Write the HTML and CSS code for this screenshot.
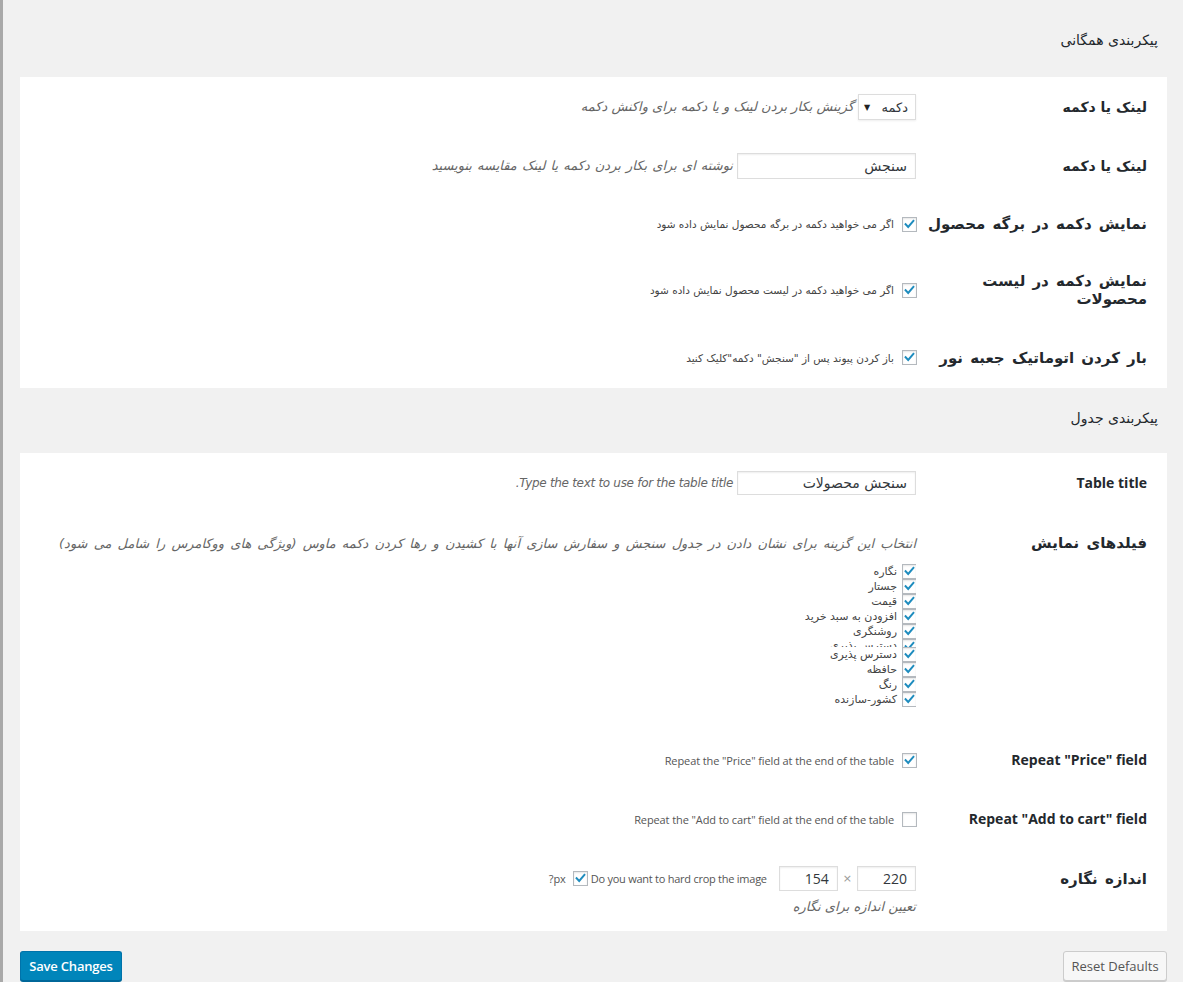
FILE: index.html
```html
<!DOCTYPE html>
<html lang="fa" dir="rtl">
<head>
<meta charset="utf-8">
<title>تنظیمات</title>
<link rel="stylesheet" href="styles.css">
</head>
<body>
<div class="frame">
<div class="wrap">
  <h2 class="sec-title first">پیکربندی همگانی</h2>
  <div class="panel">
    <div class="row h60">
      <div class="label tight">لینک یا دکمه</div>
      <div class="field">
        <div class="select"><span>دکمه</span><span class="arrow">▼</span></div>
        <span class="desc">گزینش بکار بردن لینک و یا دکمه برای واکنش دکمه</span>
      </div>
    </div>
    <div class="row h58">
      <div class="label tight">لینک یا دکمه</div>
      <div class="field">
        <div class="input wide">سنجش</div>
        <span class="desc spaced">نوشته ای برای بکار بردن دکمه یا لینک مقایسه بنویسید</span>
      </div>
    </div>
    <div class="row h58">
      <div class="label">نمایش دکمه در برگه محصول</div>
      <div class="field">
        <span class="cb on"><svg viewBox="0 0 16 16"><path d="M3.2 7.6 L6.4 11 L12.8 3.6"/></svg></span>
        <span class="small">اگر می خواهید دکمه در برگه محصول نمایش داده شود</span>
      </div>
    </div>
    <div class="row h74">
      <div class="label">نمایش دکمه در لیست<br>محصولات</div>
      <div class="field">
        <span class="cb on"><svg viewBox="0 0 16 16"><path d="M3.2 7.6 L6.4 11 L12.8 3.6"/></svg></span>
        <span class="small">اگر می خواهید دکمه در لیست محصول نمایش داده شود</span>
      </div>
    </div>
    <div class="row h61">
      <div class="label">بار کردن اتوماتیک جعبه نور</div>
      <div class="field">
        <span class="cb on"><svg viewBox="0 0 16 16"><path d="M3.2 7.6 L6.4 11 L12.8 3.6"/></svg></span>
        <span class="small">باز کردن پیوند پس از "سنجش" دکمه"کلیک کنید</span>
      </div>
    </div>
  </div>

  <h2 class="sec-title second">پیکربندی جدول</h2>
  <div class="panel">
    <div class="row h60">
      <div class="label en">Table title</div>
      <div class="field">
        <div class="input wide short">سنجش محصولات</div>
        <span class="desc en">Type the text to use for the table title.</span>
      </div>
    </div>
    <div class="row top fields-row">
      <div class="label">فیلدهای نمایش</div>
      <div class="field col">
        <span class="desc wider">انتخاب این گزینه برای نشان دادن در جدول سنجش و سفارش سازی آنها با کشیدن و رها کردن دکمه ماوس (ویژگی های ووکامرس را شامل می شود)</span>
        <div class="checklist">
          <div class="item"><span class="cb on"><svg viewBox="0 0 16 16"><path d="M3.2 7.6 L6.4 11 L12.8 3.6"/></svg></span><span>نگاره</span></div>
          <div class="item"><span class="cb on"><svg viewBox="0 0 16 16"><path d="M3.2 7.6 L6.4 11 L12.8 3.6"/></svg></span><span>جستار</span></div>
          <div class="item"><span class="cb on"><svg viewBox="0 0 16 16"><path d="M3.2 7.6 L6.4 11 L12.8 3.6"/></svg></span><span>قیمت</span></div>
          <div class="item"><span class="cb on"><svg viewBox="0 0 16 16"><path d="M3.2 7.6 L6.4 11 L12.8 3.6"/></svg></span><span>افزودن به سبد خرید</span></div>
          <div class="item"><span class="cb on"><svg viewBox="0 0 16 16"><path d="M3.2 7.6 L6.4 11 L12.8 3.6"/></svg></span><span>روشنگری</span></div>
          <div class="item cut"><span class="cb on"><svg viewBox="0 0 16 16"><path d="M3.2 7.6 L6.4 11 L12.8 3.6"/></svg></span><span>دسترس پذیری</span></div>
          <div class="item"><span class="cb on"><svg viewBox="0 0 16 16"><path d="M3.2 7.6 L6.4 11 L12.8 3.6"/></svg></span><span>دسترس پذیری</span></div>
          <div class="item"><span class="cb on"><svg viewBox="0 0 16 16"><path d="M3.2 7.6 L6.4 11 L12.8 3.6"/></svg></span><span>حافظه</span></div>
          <div class="item"><span class="cb on"><svg viewBox="0 0 16 16"><path d="M3.2 7.6 L6.4 11 L12.8 3.6"/></svg></span><span>رنگ</span></div>
          <div class="item"><span class="cb on"><svg viewBox="0 0 16 16"><path d="M3.2 7.6 L6.4 11 L12.8 3.6"/></svg></span><span>کشور-سازنده</span></div>
        </div>
      </div>
    </div>
    <div class="row h60">
      <div class="label en">Repeat "Price" field</div>
      <div class="field">
        <span class="cb on"><svg viewBox="0 0 16 16"><path d="M3.2 7.6 L6.4 11 L12.8 3.6"/></svg></span>
        <span class="small en">Repeat the "Price" field at the end of the table</span>
      </div>
    </div>
    <div class="row h58">
      <div class="label en">Repeat "Add to cart" field</div>
      <div class="field">
        <span class="cb"></span>
        <span class="small en">Repeat the "Add to cart" field at the end of the table</span>
      </div>
    </div>
    <div class="row top size-row">
      <div class="label">اندازه نگاره</div>
      <div class="field col">
        <div class="size-line">
          <div class="input num">220</div>
          <span class="times">×</span>
          <div class="input num">154</div>
          <span class="small en crop-text" dir="ltr">Do you want to hard crop the image</span>
          <span class="cb on crop"><svg viewBox="0 0 16 16"><path d="M3.2 7.6 L6.4 11 L12.8 3.6"/></svg></span>
          <span class="small en" dir="ltr">?px</span>
        </div>
        <span class="desc">تعیین اندازه برای نگاره</span>
      </div>
    </div>
  </div>

  <div class="actions">
    <button class="btn secondary" type="button">Reset Defaults</button>
    <button class="btn primary" type="button">Save Changes</button>
  </div>
</div>
</div>
</body>
</html>
```

FILE: styles.css
```css
html, body {
  margin: 0;
  padding: 0;
}
body {
  background: #f1f1f1;
  font-family: "DejaVu Sans", "Noto Sans", sans-serif;
  color: #444;
}
.frame {
  border-left: 3px solid #a9a9a9;
  min-height: 982px;
  box-sizing: border-box;
}
.wrap {
  padding: 0 16px 0 17px;
}
.sec-title {
  font-size: 14px;
  font-weight: normal;
  color: #23282d;
  margin: 0;
  line-height: 20px;
}
.sec-title.first {
  padding: 30px 9px 27px 0;
}
.sec-title.second {
  padding: 20px 9px 25px 0;
}
.panel {
  background: #fff;
  padding: 0 20px;
}
.row {
  display: grid;
  grid-template-columns: 231px 1fr;
  align-items: center;
}
.row.top {
  align-items: start;
}
.h58 { height: 58px; }
.h60 { height: 60px; }
.h61 { height: 61px; }
.h74 { height: 74px; }
.label {
  font-weight: bold;
  font-size: 15px;
  word-spacing: 2px;
  color: #23282d;
  padding-left: 10px;
  line-height: 18px;
  white-space: nowrap;
}
.label.tight {
  font-size: 14px;
  word-spacing: 0;
}
.label.en {
  font-family: "Open Sans", sans-serif;
  font-size: 14px;
  word-spacing: 0;
}
.field {
  display: flex;
  align-items: center;
  gap: 4px;
}
.field.col {
  flex-direction: column;
  align-items: flex-start;
  gap: 0;
}
.desc {
  font-style: italic;
  font-size: 13px;
  color: #666;
  line-height: 20px;
}
.desc.spaced {
  word-spacing: 1px;
}
.desc.wider {
  word-spacing: 2px;
}
.desc.en {
  font-size: 12px;
  letter-spacing: -0.3px;
}
.small {
  font-size: 10.5px;
  color: #444;
}
.small.en {
  font-family: "Open Sans", sans-serif;
  font-size: 11px;
  letter-spacing: -0.1px;
  color: #555;
}
.select {
  width: 58px;
  height: 26px;
  box-sizing: border-box;
  border: 1px solid #ddd;
  box-shadow: 0 1px 2px rgba(0,0,0,.07);
  display: flex;
  justify-content: space-between;
  align-items: center;
  padding: 0 7px 0 5px;
  font-size: 13px;
  color: #32373c;
}
.select .arrow {
  font-size: 8px;
  color: #222;
}
.input {
  height: 26px;
  box-sizing: border-box;
  border: 1px solid #ddd;
  box-shadow: inset 0 1px 2px rgba(0,0,0,.07);
  display: flex;
  align-items: center;
  padding: 0 8px;
  font-size: 14px;
  color: #32373c;
}
.input.wide {
  width: 179px;
}
.input.short {
  height: 24px;
}
.input.num {
  width: 59px;
  height: 25px;
  font-family: "Open Sans", sans-serif;
  font-size: 14px;
  justify-content: flex-start;
}
.cb {
  width: 15px;
  height: 15px;
  box-sizing: border-box;
  border: 1px solid #b4b9be;
  background: #fff;
  box-shadow: inset 0 1px 2px rgba(0,0,0,.1);
  display: inline-flex;
  flex: none;
  margin-left: 4px;
  margin-right: -1px;
}
.cb svg {
  width: 100%;
  height: 100%;
  display: block;
}
.cb path {
  fill: none;
  stroke: #1e8cbe;
  stroke-width: 2.4;
  stroke-linecap: square;
}
.fields-row {
  padding: 20px 0 23px;
}
.fields-row .label {
  line-height: 20px;
}
.fields-row .desc {
  margin-top: 1px;
}
.checklist {
  margin-top: 10px;
  display: flex;
  flex-direction: column;
}
.item {
  display: flex;
  align-items: center;
  height: 15px;
  overflow: hidden;
  font-size: 11px;
  color: #444;
}
.item .cb {
  margin-left: 5px;
}
.item.cut {
  height: 8px;
  align-items: flex-start;
}
.size-row {
  padding: 18px 0 14px;
}
.size-row .label {
  padding-top: 3px;
  line-height: 20px;
}
.size-line {
  display: flex;
  align-items: center;
}
.times {
  font-size: 11px;
  color: #999;
  margin: 0 5px;
}
.crop-text {
  margin-right: 12px;
}
.small.en.crop-text {
  letter-spacing: -0.25px;
}
.cb.crop {
  margin: 0 3px 0 7px;
}
.size-row .desc {
  margin-top: 6px;
}
.actions {
  display: flex;
  justify-content: space-between;
  padding-top: 20px;
}
.btn {
  height: 30px;
  box-sizing: border-box;
  border-radius: 3px;
  font-family: "Open Sans", sans-serif;
  font-size: 13px;
  padding: 0;
  white-space: nowrap;
  cursor: pointer;
}
.btn.primary {
  width: 102px;
  background: #0085ba;
  border: 1px solid #0073aa;
  border-bottom-color: #006799;
  box-shadow: 0 1px 0 #006799;
  color: #fff;
  font-weight: 600;
  letter-spacing: -0.2px;
}
.btn.secondary {
  width: 104px;
  background: #f7f7f7;
  border: 1px solid #ccc;
  box-shadow: 0 1px 0 #ccc;
  color: #555;
}
```
